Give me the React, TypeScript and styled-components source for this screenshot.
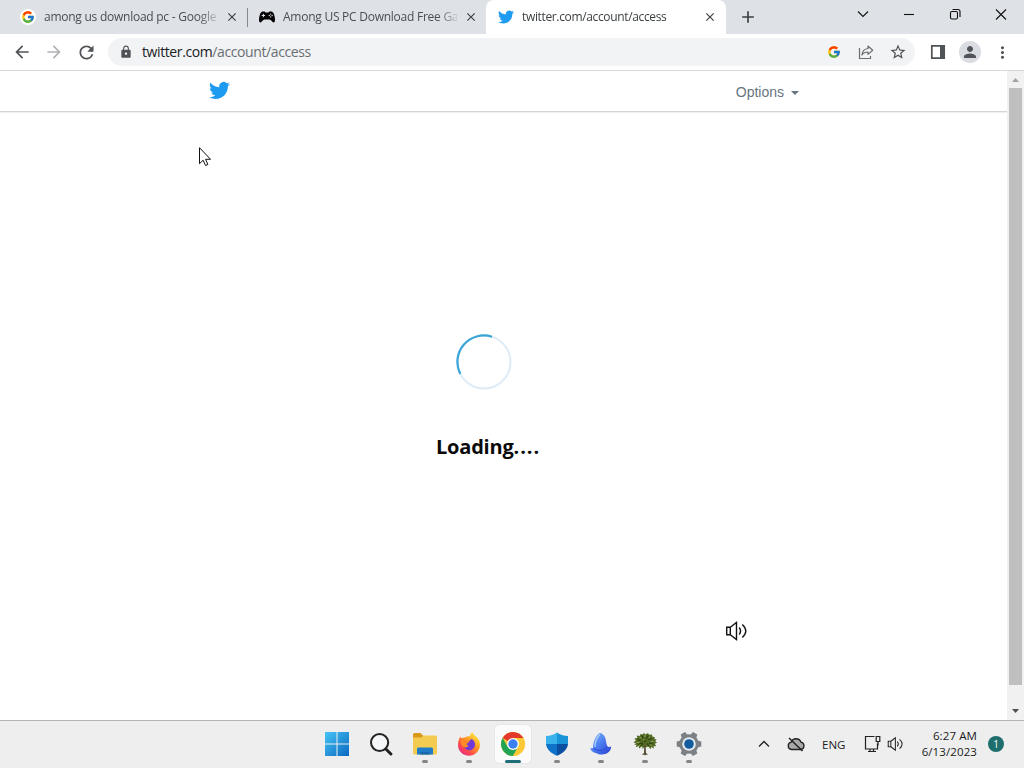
import { ReactNode } from "react";
import styled, { createGlobalStyle } from "styled-components";
import {
  MdAdd,
  MdArrowBack,
  MdArrowForward,
  MdClose,
  MdLock,
  MdMoreVert,
  MdPerson,
  MdRefresh,
  MdStarBorder,
} from "react-icons/md";
import { FcGoogle } from "react-icons/fc";

type Tab = {
  id: number;
  title: string;
  icon: ReactNode;
  active?: boolean;
  divider?: boolean;
};

type TaskApp = {
  id: number;
  name: string;
  icon: ReactNode;
  state: "none" | "running" | "active";
};

const TwitterBird = ({ size }: { size: number }) => (
  <svg width={size} height={size} viewBox="0 0 24 24" fill="#1d9bf0">
    <path d="M23.953 4.57a10 10 0 01-2.825.775 4.958 4.958 0 002.163-2.723c-.951.555-2.005.959-3.127 1.184a4.92 4.92 0 00-8.384 4.482C7.69 8.095 4.067 6.13 1.64 3.162a4.822 4.822 0 00-.666 2.475c0 1.71.87 3.213 2.188 4.096a4.904 4.904 0 01-2.228-.616v.06a4.923 4.923 0 003.946 4.827 4.996 4.996 0 01-2.212.085 4.936 4.936 0 004.604 3.417 9.867 9.867 0 01-6.102 2.105c-.39 0-.779-.023-1.17-.067a13.995 13.995 0 007.557 2.209c9.053 0 13.998-7.496 13.998-13.985 0-.21 0-.42-.015-.63A9.935 9.935 0 0024 4.59z" />
  </svg>
);

const Gamepad = () => (
  <svg width="16" height="16" viewBox="0 0 16 16">
    <path
      d="M3.600 2.600h2.100l.8.8h3l.8-.8h2.100c1.700 0 2.600 2.400 3.200 5 .6 2.800.6 5.800-1 5.800-1.500 0-2.300-2.900-4-3H5.400c-1.700.1-2.500 3-4 3-1.600 0-1.600-3-1-5.800.6-2.600 1.500-5 3.200-5z"
      fill="#000"
    />
    <path d="M4.400 4.800v3.400M2.700 6.500h3.400" stroke="#dee1e6" strokeWidth="1" />
    <circle cx="11.700" cy="5.100" r=".7" fill="#dee1e6" />
    <circle cx="11.700" cy="7.900" r=".7" fill="#dee1e6" />
    <circle cx="10.300" cy="6.500" r=".7" fill="#dee1e6" />
    <circle cx="13.100" cy="6.500" r=".7" fill="#dee1e6" />
  </svg>
);

const WindowsLogo = () => (
  <svg width="24" height="24" viewBox="0 0 24 24">
    <defs>
      <linearGradient id="win" x1="0" y1="0" x2="1" y2="1">
        <stop offset="0" stopColor="#45c4f5" />
        <stop offset="1" stopColor="#0a68c0" />
      </linearGradient>
    </defs>
    <path d="M0 0h11.500v11.500H0zM12.500 0H24v11.500H12.500zM0 12.500h11.500V24H0zM12.500 12.500H24V24H12.500z" fill="url(#win)" />
  </svg>
);

const SearchIcon = () => (
  <svg width="24" height="24" viewBox="0 0 24 24" fill="none" stroke="#222">
    <circle cx="10.600" cy="10.500" r="8.600" strokeWidth="2" fill="#f4f6f8" />
    <path d="M16.900 17l5 5" strokeWidth="3" strokeLinecap="round" />
  </svg>
);

const FolderIcon = () => (
  <svg width="26" height="24" viewBox="0 0 26 24">
    <path d="M1 2.500Q1 1 2.500 1h6l3 3H24q1 0 1 1v5H1z" fill="#d99a1c" />
    <path d="M1 5.500h8.500l2-2H24q1 0 1 1V21q0 1.500-1.500 1.500h-21Q1 22.500 1 21z" fill="#f3cb50" />
    <path d="M5 22.500V17q0-1.500 1.500-1.500h13q1.500 0 1.500 1.500v5.500z" fill="#1f7cc8" />
    <path d="M8.500 22.500v-2.500h9v2.500z" fill="#1a68ac" />
  </svg>
);

const FirefoxIcon = () => (
  <svg width="24" height="24" viewBox="0 0 24 24">
    <defs>
      <linearGradient id="fox" x1=".85" y1=".1" x2=".2" y2=".95">
        <stop offset="0" stopColor="#ffe63c" />
        <stop offset=".4" stopColor="#ff9a24" />
        <stop offset=".75" stopColor="#ff4a4a" />
        <stop offset="1" stopColor="#e22a86" />
      </linearGradient>
    </defs>
    <path
      d="M3.500 4.500c.3 1 1 1.500 1.700 1.800C6 5.600 7 5.400 8 5.600c1.500-1.400 3.300-1.600 5-1.400C13.200 2.400 14 1 15.500.3c.6 2.200 2.300 3.100 3.800 4.500 2.400 2 4 5 3.700 8.600C22.500 19.300 17.800 23.700 12 23.700 5.800 23.700 1 19 1 13c0-3.300.8-6.300 2.500-8.500z"
      fill="url(#fox)"
    />
    <path d="M8.300 9.200c1.500.2 3 .5 4.200 0 .3-1 .9-1.700 2-2.200 2.300 1.200 4 3.500 3.500 6.300-.4 2.900-2.900 5-5.800 5-2.500 0-4.500-1.500-5.200-3.800 1.800 1 3.200.4 4.500-.8-2-.4-3.700-1.800-3.200-4.500z" fill="#7139d8" />
    <path d="M4 8.500c1.400-.9 3-.6 4.500.5 1.300.6 2.800.2 4 .2-.5 1.500-1.800 1.700-2.600 2.400-.3 1.200.2 2 1.600 2.100-1.500 2-3.500 2.300-5.500.7C4.500 13 3.600 11 4 8.500z" fill="#ff8b26" />
  </svg>
);

const ChromeIcon = () => (
  <svg width="24" height="24" viewBox="0 0 24 24">
    <circle cx="12" cy="12" r="12" fill="#fcc934" />
    <path d="M12 12L1.610 6A12 12 0 0 1 22.390 6H12z" fill="#e3392b" />
    <path d="M1.610 6A12 12 0 0 0 12 24l5.200-9L12 12 6.800 15z" fill="#23a455" />
    <path d="M22.390 6A12 12 0 0 1 12 24l5.200-9L12 6z" fill="#fcc934" />
    <circle cx="12" cy="12" r="6" fill="#fff" />
    <circle cx="12" cy="12" r="4.700" fill="#3c7ff0" />
  </svg>
);

const ShieldIcon = () => (
  <svg width="24" height="24" viewBox="0 0 24 24">
    <path d="M12 .500c3 2.300 6.600 3.300 11 3.500v8H12z" fill="#1795d8" />
    <path d="M12 .500C9 2.800 5.400 3.800 1 4v8h11z" fill="#38b2ec" />
    <path d="M1 12h11v11.800C5.500 21 1.500 17 1 12z" fill="#0d72c8" />
    <path d="M23 12H12v11.800C18.500 21 22.500 17 23 12z" fill="#0b50a0" />
  </svg>
);

const FinIcon = () => (
  <svg width="24" height="24" viewBox="0 0 24 24">
    <defs>
      <linearGradient id="fin" x1="0" y1="0" x2="1" y2="1">
        <stop offset="0" stopColor="#8fc0fb" />
        <stop offset=".5" stopColor="#4a7cf0" />
        <stop offset="1" stopColor="#2a3fd0" />
      </linearGradient>
    </defs>
    <path
      d="M11 .700c3.200 1 5 3.400 5.600 6.500.6 2.900.7 5.300 2.100 7.600 1.200.3 2.300.1 3.500-.2-.2 3.400-2 6-5.200 7.200-3.300 1.200-6.800 1-9.500-.6-3-.5-5.700-1.800-6.200-5.400 1 .4 1.900.5 2.700.1C4 10 6.300 3.700 11 .700z"
      fill="url(#fin)"
    />
    <path d="M4.300 16.200c4 3.300 9.900 3.300 14.300-1.200" stroke="#3050d8" strokeWidth="1.300" fill="none" />
    <path d="M11 2.500C7.600 5.500 5.800 10 6 15" stroke="#a9cffc" strokeWidth="1.200" fill="none" />
  </svg>
);

const TreeIcon = () => (
  <svg width="24" height="24" viewBox="0 0 24 24">
    <path
      d="M11 1l1.500 1.500L15 1.100l1 1.600 3-.2.300 2 2.700.7-.7 1.600 2.400.8-1.600 1.500 1.900 1.600-2.200 1 1.400 2.500-2.500-.2.200 2.400-2.800-1.500-.4 2.300-2.500-2.800-2 .9-1.400-1-2 2.600-.7-2.600-3 2.200-.3-2.400-3 1.200.7-2.600-2.600.2L3 11.700.6 10.200l2.400-1.600L1.300 6.500l3-.6-.5-2.300 3 .3.700-2 2 .6z"
      fill="#536b24"
    />
    <path
      d="M4.500 7.500l3 1M9 3.500l1 3M15 3.500l-1.500 3M19 6l-3.500 2M20 11l-4 .500M5 12.500l4-1.500M8 14l2-3M16 14l-2-2.500M11 9l2 1"
      stroke="#2c4112"
      strokeWidth="1.200"
    />
    <path
      d="M6.500 5l2 1M12 3l0 2M17 4.500l-1 1.500M18 9.500l2.500 0M3.500 10.500l3 0M6 14l1-1.500M17 12.500l1.500 1.500M12 12.500l1 1M10 8l1-1"
      stroke="#95a456"
      strokeWidth="1"
    />
    <path d="M11.300 12.500h1.400l.2 8.500 2.200 1.600-2.300.2-.8.600-.8-.6-2.300-.1 2.100-1.700z" fill="#51472b" />
  </svg>
);

const SettingsIcon = () => (
  <svg width="26" height="26" viewBox="0 0 26 26">
    <g fill="#7c8084">
      <circle cx="13" cy="13" r="9.800" />
      {[0, 60, 120, 180, 240, 300].map((a) => (
        <path key={a} d="M9.600 5l.900-4.300h5l.900 4.300z" transform={`rotate(${a + 30} 13 13)`} />
      ))}
    </g>
    <circle cx="13" cy="13" r="6.800" fill="#e4eaf0" />
    <circle cx="13" cy="13" r="4.800" fill="#125c9e" />
  </svg>
);

const Speaker = ({ size, color = "#111" }: { size: number; color?: string }) => (
  <svg width={size} height={size} viewBox="0 0 22 22" fill="none" stroke={color} strokeWidth="1.400">
    <path d="M1.700 7.200h3.600v7.600H1.700zM5.300 7.200L11.500 2.500v17l-6.200-4.700" />
    <path d="M14.200 7.500q2.700 3.500 0 7M17.300 4.500q7 6.500 0 13" />
  </svg>
);

function GoogleBadge() {
  return (
    <Badge>
      <FcGoogle size={14} />
    </Badge>
  );
}

const tabs: Tab[] = [
  {
    id: 1,
    title: "among us download pc - Google",
    icon: <GoogleBadge />,
    divider: true,
  },
  { id: 2, title: "Among US PC Download Free Ga", icon: <Gamepad /> },
  {
    id: 3,
    title: "twitter.com/account/access",
    icon: <TwitterBird size={16} />,
    active: true,
  },
];

const apps: TaskApp[] = [
  { id: 1, name: "Start", icon: <WindowsLogo />, state: "none" },
  { id: 2, name: "Search", icon: <SearchIcon />, state: "none" },
  { id: 3, name: "Files", icon: <FolderIcon />, state: "running" },
  { id: 4, name: "Firefox", icon: <FirefoxIcon />, state: "running" },
  { id: 5, name: "Chrome", icon: <ChromeIcon />, state: "active" },
  { id: 6, name: "Security", icon: <ShieldIcon />, state: "running" },
  { id: 7, name: "Wireshark", icon: <FinIcon />, state: "running" },
  { id: 8, name: "Tree", icon: <TreeIcon />, state: "running" },
  { id: 9, name: "Settings", icon: <SettingsIcon />, state: "running" },
];

const TabStrip = () => (
  <Strip>
    {tabs.map(({ id, title, icon, active, divider }) => (
      <TabItem key={id} $active={active} $divider={divider}>
        <TabIcon>{icon}</TabIcon>
        <TabTitle $active={active}>{title}</TabTitle>
        <TabClose type="button" aria-label="close">
          <MdClose size={14} />
        </TabClose>
      </TabItem>
    ))}
    <NewTab type="button" aria-label="new tab">
      <MdAdd size={20} />
    </NewTab>
    <WindowButtons>
      <svg width="46" height="28" viewBox="0 0 46 28">
        <path d="M18 11.500l5 5 5-5" />
      </svg>
      <svg width="46" height="28" viewBox="0 0 46 28">
        <path d="M18 14.500h10" />
      </svg>
      <svg width="46" height="28" viewBox="0 0 46 28">
        <rect x="18.500" y="11.500" width="7" height="7.500" rx="1.500" />
        <path d="M20.500 9.500h5.500a2 2 0 0 1 2 2v5.500" />
      </svg>
      <svg width="46" height="28" viewBox="0 0 46 28">
        <path d="M18 9.500l10 10M28 9.500l-10 10" />
      </svg>
    </WindowButtons>
  </Strip>
);

const Toolbar = () => (
  <Bar>
    <BarButton>
      <MdArrowBack size={20} />
    </BarButton>
    <BarButton $muted>
      <MdArrowForward size={20} />
    </BarButton>
    <BarButton>
      <MdRefresh size={21} />
    </BarButton>
    <Omnibox>
      <MdLock size={14} />
      <Url>
        <b>twitter.com</b>/account/access
      </Url>
      <BarButton>
        <FcGoogle size={14} />
      </BarButton>
      <BarButton>
        <svg width="16" height="16" viewBox="0 0 16 16" fill="none" stroke="#6b6e72" strokeWidth="1.200">
          <path d="M1.500 4v10.500h11V12" />
          <path d="M10 2l4.700 4.200L10 10.400V8C7.300 8 5.300 8.800 3.900 11 4.300 7.400 6.300 4.900 10 4.500z" strokeLinejoin="round" />
        </svg>
      </BarButton>
      <BarButton>
        <MdStarBorder size={18} />
      </BarButton>
    </Omnibox>
    <BarButton>
      <svg width="16" height="16" viewBox="0 0 16 16">
        <path d="M1.800 1.800h12.400v12.400H1.800z" fill="none" stroke="#505357" strokeWidth="1.700" />
        <path d="M10 1h5v14h-5z" fill="#505357" />
      </svg>
    </BarButton>
    <BarButton>
      <Avatar>
        <MdPerson size={18} />
      </Avatar>
    </BarButton>
    <BarButton>
      <MdMoreVert size={19} />
    </BarButton>
  </Bar>
);

const Page = () => (
  <PageWrap>
    <PageBody>
      <PageHeader>
        <TwitterBird size={21} />
        <Options>
          Options
          <Caret />
        </Options>
      </PageHeader>
      <Content>
        <Spinner width="56" height="56" viewBox="0 0 56 56" fill="none">
          <circle cx="28" cy="28" r="26.500" stroke="#dfebf5" strokeWidth="2" />
          <path d="M36 2.700A26.500 26.500 0 0 0 4.300 40" stroke="#3aa5d8" strokeWidth="2.200" />
        </Spinner>
        <LoadingText>
          Loading<Dots>....</Dots>
        </LoadingText>
        <AudioButton type="button" aria-label="audio">
          <Speaker size={22} />
        </AudioButton>
      </Content>
    </PageBody>
    <Scrollbar>
      <Arrow $up />
      <Thumb />
      <Arrow />
    </Scrollbar>
  </PageWrap>
);

const Taskbar = () => (
  <TaskWrap>
    <Apps>
      {apps.map(({ id, name, icon, state }) => (
        <AppButton key={id} type="button" aria-label={name} $active={state === "active"}>
          {icon}
          <Indicator $state={state} />
        </AppButton>
      ))}
    </Apps>
    <Tray>
      <svg width="12" height="8" viewBox="0 0 12 8" fill="none" stroke="#222" strokeWidth="1.300">
        <path d="M1 6.500l5-5 5 5" />
      </svg>
      <svg width="18" height="16" viewBox="0 0 18 16" fill="none" stroke="#222" strokeWidth="1.300">
        <path d="M4.500 13.500a3.700 3.700 0 0 1-.3-7.300A5.200 5.200 0 0 1 14 6.200a3.700 3.700 0 0 1-.3 7.300z" fill="#a9a9a9" />
        <path d="M2 2l13.500 13" strokeWidth="1.500" />
      </svg>
      <Lang>ENG</Lang>
      <Devices>
        <svg width="17" height="18" viewBox="0 0 17 18" fill="none" stroke="#222" strokeWidth="1.200">
          <path d="M10.500 1.500h-9v12.500h12V8.500M4 16.500h8M6 14v2.500M9.500 14v2.500" />
          <path d="M12.200 1.500h3.600v5h-3.600zM14 6.500v4" />
        </svg>
        <Speaker size={16} color="#222" />
      </Devices>
      <Clock>
        <span>6:27 AM</span>
        <span>6/13/2023</span>
      </Clock>
      <Count>1</Count>
    </Tray>
  </TaskWrap>
);

export default function App() {
  return (
    <>
      <GlobalStyle />
      <Desktop>
        <TabStrip />
        <Toolbar />
        <Page />
        <Taskbar />
        <Pointer width="13" height="20" viewBox="0 0 13 20">
          <path
            d="M1.500 .700v16l3.600-3.500 2.400 5.300 2.400-1-2.300-5.200h4.900z"
            fill="#fff"
            stroke="#111"
            strokeWidth="1"
          />
        </Pointer>
      </Desktop>
    </>
  );
}

const GlobalStyle = createGlobalStyle`
  * {
    box-sizing: border-box;
  }

  body {
    margin: 0;
    overflow: hidden;
    font-family: "Open Sans", "Noto Sans", sans-serif;
  }

  button {
    padding: 0;
    border: none;
    background: none;
    font: inherit;
  }

  svg {
    display: block;
    flex-shrink: 0;
  }
`;

const Desktop = styled.div`
  position: relative;
  display: flex;
  flex-direction: column;
  width: 1024px;
  height: 768px;
  background-color: #fff;
`;

const Strip = styled.div`
  display: flex;
  height: 34px;
  padding-left: 8px;
  background-color: #dee1e6;
`;

const TabItem = styled.div<{ $active?: boolean; $divider?: boolean }>`
  position: relative;
  display: flex;
  align-items: center;
  width: ${({ $active }) => ($active ? 240 : 239)}px;
  padding-left: 12px;
  border-radius: 8px 8px 0 0;
  background-color: ${({ $active }) => ($active ? "#fff" : "transparent")};

  &::after {
    content: "";
    display: ${({ $divider }) => ($divider ? "block" : "none")};
    position: absolute;
    right: -1px;
    top: 8px;
    width: 1px;
    height: 19px;
    background-color: #85888c;
  }
`;

const Badge = styled.div`
  display: flex;
  align-items: center;
  justify-content: center;
  width: 16px;
  height: 16px;
  border-radius: 50%;
  background-color: #fff;
`;

const TabIcon = styled.div`
  width: 16px;
  margin-right: 8px;
`;

const TabTitle = styled.div<{ $active?: boolean }>`
  width: 174px;
  white-space: nowrap;
  font-size: 12px;
  letter-spacing: ${({ $active }) => ($active ? -0.35 : -0.25)}px;
  line-height: 18px;
  color: ${({ $active }) => ($active ? "#3c4043" : "#4a4e54")};
  mask-image: linear-gradient(to right, #000 154px, transparent 178px);
`;

const TabClose = styled.button`
  display: flex;
  align-items: center;
  justify-content: center;
  width: 16px;
  height: 16px;
  margin-left: 6px;
  color: #3c4043;
`;

const NewTab = styled.button`
  display: flex;
  align-items: center;
  justify-content: center;
  width: 28px;
  margin-left: 8px;
  color: #3c4043;
`;

const WindowButtons = styled.div`
  display: flex;
  margin-left: auto;
  fill: none;
  stroke: #111;
  stroke-width: 1.1;
`;

const Bar = styled.div`
  display: flex;
  align-items: center;
  height: 37px;
  padding: 0 6px;
  border-bottom: 1px solid #d6d8da;
  background-color: #fff;
`;

const BarButton = styled.div<{ $muted?: boolean }>`
  display: flex;
  align-items: center;
  justify-content: center;
  width: 32px;
  height: 28px;
  color: ${({ $muted }) => ($muted ? "#b1b3b6" : "#505357")};
`;

const Omnibox = styled.div`
  display: flex;
  align-items: center;
  flex: 1;
  height: 28px;
  margin: 0 7px 0 6px;
  padding: 0 1px 0 11px;
  border-radius: 14px;
  background-color: #f1f3f4;
  color: #505357;
`;

const Url = styled.div`
  flex: 1;
  margin-left: 9px;
  padding-bottom: 1px;
  font-size: 14px;
  letter-spacing: -0.4px;
  color: #6a6e73;

  b {
    font-weight: normal;
    color: #202124;
  }
`;

const Avatar = styled.div`
  display: flex;
  align-items: center;
  justify-content: center;
  width: 22px;
  height: 22px;
  border-radius: 50%;
  background-color: #d9dce1;
`;

const PageWrap = styled.div`
  display: flex;
  flex: 1;
`;

const PageBody = styled.div`
  display: flex;
  flex-direction: column;
  flex: 1;
`;

const PageHeader = styled.div`
  display: flex;
  align-items: center;
  justify-content: space-between;
  height: 41px;
  padding: 0 208px 1px 209px;
  border-bottom: 1px solid #d3d5d7;
  box-shadow: 0 1px 1px #f0f0f0;
`;

const Options = styled.div`
  display: flex;
  align-items: center;
  padding-top: 3px;
  font-family: "Liberation Sans", Arial, sans-serif;
  font-size: 14px;
  color: #66757f;
`;

const Caret = styled.div`
  margin: 2px 0 0 7px;
  border: 4px solid transparent;
  border-top-color: #66757f;
  border-bottom: none;
`;

const Content = styled.div`
  display: flex;
  flex-direction: column;
  flex: 1;
  padding-top: 222px;
`;

const Spinner = styled.svg`
  margin-left: 456px;
`;

const LoadingText = styled.div`
  margin: 42px 0 0 436px;
  font-size: 20px;
  font-weight: 700;
  letter-spacing: -0.2px;
  line-height: 30px;
  color: #0a0a0a;
`;

const Dots = styled.span`
  letter-spacing: 0.9px;
`;

const AudioButton = styled.button`
  width: 22px;
  margin: 158px 0 0 725px;
`;

const Scrollbar = styled.div`
  display: flex;
  flex-direction: column;
  align-items: center;
  width: 17px;
  background-color: #f1f1f1;
`;

const Arrow = styled.div<{ $up?: boolean }>`
  width: 17px;
  height: 17px;
  background-color: ${({ $up }) => ($up ? "#a3a3a3" : "#505050")};
  clip-path: ${({ $up }) =>
    $up
      ? "polygon(5px 11px, 12px 11px, 8.5px 7px)"
      : "polygon(5px 6px, 12px 6px, 8.5px 10px)"};
`;

const Thumb = styled.div`
  width: 13px;
  height: 597px;
  margin-bottom: auto;
  background-color: #bfbfbf;
`;

const TaskWrap = styled.div`
  display: flex;
  justify-content: space-between;
  height: 48px;
  padding: 0 20px 1px 319px;
  border-top: 1px solid #b4b4b6;
  background-color: #eeeeee;
`;

const Apps = styled.div`
  display: flex;
  align-items: center;
  gap: 8px;
`;

const AppButton = styled.button<{ $active: boolean }>`
  position: relative;
  display: flex;
  align-items: center;
  justify-content: center;
  width: 36px;
  height: 38px;
  border-radius: 4px;
  background-color: ${({ $active }) => ($active ? "#fbfbfb" : "transparent")};
  box-shadow: ${({ $active }) => ($active ? "0 0 1px #bbb" : "none")};
`;

const Indicator = styled.div<{ $state: TaskApp["state"] }>`
  display: ${({ $state }) => ($state === "none" ? "none" : "block")};
  position: absolute;
  bottom: 0;
  width: ${({ $state }) => ($state === "active" ? 16 : 6)}px;
  height: 3px;
  border-radius: 2px;
  background-color: ${({ $state }) => ($state === "active" ? "#1f6e78" : "#858585")};
`;

const Tray = styled.div`
  display: flex;
  align-items: center;
  font-size: 11.5px;
  color: #1b1b1b;

  & > svg {
    margin-right: 17px;
  }
`;

const Lang = styled.div`
  width: 24px;
  margin-right: 18px;
`;

const Devices = styled.div`
  display: flex;
  align-items: center;
  gap: 6px;
  width: 40px;
  margin-right: 16px;
`;

const Clock = styled.div`
  display: flex;
  flex-direction: column;
  width: 57px;
  text-align: right;
  letter-spacing: 0.1px;
  line-height: 16px;
  white-space: nowrap;
`;

const Count = styled.div`
  width: 16px;
  height: 16px;
  margin-left: 11px;
  border-radius: 50%;
  background-color: #1f6e6e;
  font-size: 10px;
  line-height: 16px;
  text-align: center;
  color: #fff;
`;

const Pointer = styled.svg`
  position: absolute;
  left: 198px;
  top: 147px;
`;
